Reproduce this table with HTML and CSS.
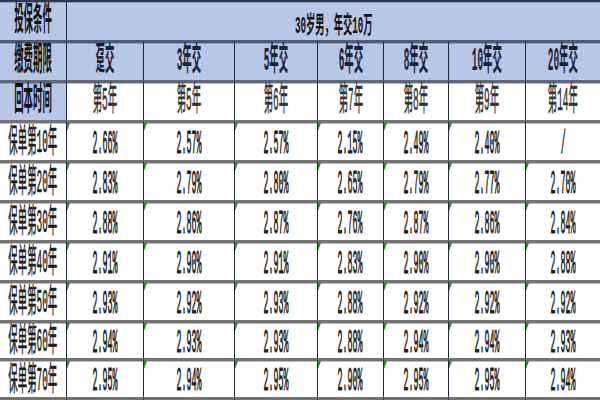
FILE: index.html
```html
<!DOCTYPE html>
<html lang="zh-CN">
<head>
<meta charset="utf-8">
<title>30岁男，年交10万</title>
<link rel="stylesheet" href="styles.css">
</head>
<body>
<div class="sheet">
  <div class="cell hd c0 top"><span class="t b">投保条件</span></div>
  <div class="cell hd title top"><span class="t tt b">30岁男，年交10万</span></div>

  <div class="cell hd c0"><span class="t b">缴费期限</span></div>
  <div class="cell hd"><span class="t b nv">趸交</span></div>
  <div class="cell hd"><span class="t b nv">3年交</span></div>
  <div class="cell hd"><span class="t b nv">5年交</span></div>
  <div class="cell hd"><span class="t b nv">6年交</span></div>
  <div class="cell hd"><span class="t b nv">8年交</span></div>
  <div class="cell hd"><span class="t b nv">10年交</span></div>
  <div class="cell hd"><span class="t b nv">20年交</span></div>

  <div class="cell hd c0 mid"><span class="t b">回本时间</span></div>
  <div class="cell mid"><span class="t gy">第5年</span></div>
  <div class="cell mid"><span class="t gy">第5年</span></div>
  <div class="cell mid"><span class="t gy">第6年</span></div>
  <div class="cell mid"><span class="t gy">第7年</span></div>
  <div class="cell mid"><span class="t gy">第8年</span></div>
  <div class="cell mid"><span class="t gy">第9年</span></div>
  <div class="cell mid"><span class="t gy">第14年</span></div>

  <div class="cell c0 dr"><span class="t">保单第10年</span></div>
  <div class="cell dr num"><span class="t n">2.66%</span></div>
  <div class="cell dr num"><span class="t n">2.57%</span></div>
  <div class="cell dr num"><span class="t n">2.57%</span></div>
  <div class="cell dr num"><span class="t n">2.15%</span></div>
  <div class="cell dr num"><span class="t n">2.49%</span></div>
  <div class="cell dr num"><span class="t n">2.40%</span></div>
  <div class="cell dr"><span class="t n">/</span></div>

  <div class="cell c0 dr"><span class="t">保单第20年</span></div>
  <div class="cell dr num"><span class="t n">2.83%</span></div>
  <div class="cell dr num"><span class="t n">2.79%</span></div>
  <div class="cell dr num"><span class="t n">2.80%</span></div>
  <div class="cell dr num"><span class="t n">2.65%</span></div>
  <div class="cell dr num"><span class="t n">2.79%</span></div>
  <div class="cell dr num"><span class="t n">2.77%</span></div>
  <div class="cell dr num"><span class="t n">2.70%</span></div>

  <div class="cell c0 dr"><span class="t">保单第30年</span></div>
  <div class="cell dr num"><span class="t n">2.88%</span></div>
  <div class="cell dr num"><span class="t n">2.86%</span></div>
  <div class="cell dr num"><span class="t n">2.87%</span></div>
  <div class="cell dr num"><span class="t n">2.76%</span></div>
  <div class="cell dr num"><span class="t n">2.87%</span></div>
  <div class="cell dr num"><span class="t n">2.86%</span></div>
  <div class="cell dr num"><span class="t n">2.84%</span></div>

  <div class="cell c0 dr"><span class="t">保单第40年</span></div>
  <div class="cell dr num"><span class="t n">2.91%</span></div>
  <div class="cell dr num"><span class="t n">2.90%</span></div>
  <div class="cell dr num"><span class="t n">2.91%</span></div>
  <div class="cell dr num"><span class="t n">2.83%</span></div>
  <div class="cell dr num"><span class="t n">2.90%</span></div>
  <div class="cell dr num"><span class="t n">2.90%</span></div>
  <div class="cell dr num"><span class="t n">2.88%</span></div>

  <div class="cell c0 dr"><span class="t">保单第50年</span></div>
  <div class="cell dr num"><span class="t n">2.93%</span></div>
  <div class="cell dr num"><span class="t n">2.92%</span></div>
  <div class="cell dr num"><span class="t n">2.93%</span></div>
  <div class="cell dr num"><span class="t n">2.88%</span></div>
  <div class="cell dr num"><span class="t n">2.92%</span></div>
  <div class="cell dr num"><span class="t n">2.92%</span></div>
  <div class="cell dr num"><span class="t n">2.92%</span></div>

  <div class="cell c0 dr"><span class="t">保单第60年</span></div>
  <div class="cell dr num"><span class="t n">2.94%</span></div>
  <div class="cell dr num"><span class="t n">2.93%</span></div>
  <div class="cell dr num"><span class="t n">2.93%</span></div>
  <div class="cell dr num"><span class="t n">2.88%</span></div>
  <div class="cell dr num"><span class="t n">2.94%</span></div>
  <div class="cell dr num"><span class="t n">2.94%</span></div>
  <div class="cell dr num"><span class="t n">2.93%</span></div>

  <div class="cell c0 dr"><span class="t">保单第70年</span></div>
  <div class="cell dr num"><span class="t n">2.95%</span></div>
  <div class="cell dr num"><span class="t n">2.94%</span></div>
  <div class="cell dr num"><span class="t n">2.95%</span></div>
  <div class="cell dr num"><span class="t n">2.90%</span></div>
  <div class="cell dr num"><span class="t n">2.95%</span></div>
  <div class="cell dr num"><span class="t n">2.95%</span></div>
  <div class="cell dr num"><span class="t n">2.94%</span></div>

  <div class="cell c0 dr"></div>
  <div class="cell dr"></div>
  <div class="cell dr"></div>
  <div class="cell dr"></div>
  <div class="cell dr"></div>
  <div class="cell dr"></div>
  <div class="cell dr"></div>
  <div class="cell dr"></div>
</div>
</body>
</html>
```

FILE: styles.css
```css
html, body {
  margin: 0;
  padding: 0;
  overflow: hidden;
  background: #ffffff;
}

.sheet {
  display: grid;
  grid-template-columns: 66px 77px 91px 83px 66px 65px 77px 75px;
  grid-template-rows: 40px 40px 40px 40px 40px 40px 40px 40px 38px 39px 40px;
  width: 600px;
  font-family: "Liberation Mono", "Noto Sans CJK SC", monospace;
  color: #1e1e1e;
}

.cell {
  position: relative;
  display: flex;
  align-items: center;
  justify-content: center;
  min-width: 0;
  border-left: 1px solid #1f2a3a;
  border-top: 3px solid #737373;
  box-shadow: inset 0 1px 0 #bcbcbc;
  background: #ffffff;
}

.c0 {
  border-left: none;
}

.hd {
  background: #b8c7e8;
  border-top-color: #4e5c76;
  box-shadow: inset 0 1px 0 #8e9bb8;
}

.top {
  border-top-width: 2px;
  border-top-color: #2c3850;
}

.mid {
  border-top-color: #5e6878;
}

.title {
  grid-column: span 7;
  padding-top: 12px;
}

.t {
  display: inline-block;
  flex-shrink: 0;
  white-space: nowrap;
  font-size: 33px;
  line-height: 1;
  transform: scaleX(0.285);
  -webkit-text-stroke: 0.6px currentColor;
}

.b {
  font-weight: bold;
  color: #111111;
  -webkit-text-stroke: 0;
}

.nv {
  color: #1a2238;
}

.gy {
  color: #333333;
}

.tt {
  font-size: 24px;
  transform: scaleX(0.385);
}

.dr {
  padding-top: 4px;
}

.n {
  font-size: 34px;
  transform: scaleX(0.245);
  color: #1f1f1f;
  -webkit-text-stroke: 1px currentColor;
}

.num::before {
  content: "";
  position: absolute;
  left: 0;
  top: 0;
  border-top: 8px solid #2d8a2d;
  border-right: 3px solid transparent;
}
```
